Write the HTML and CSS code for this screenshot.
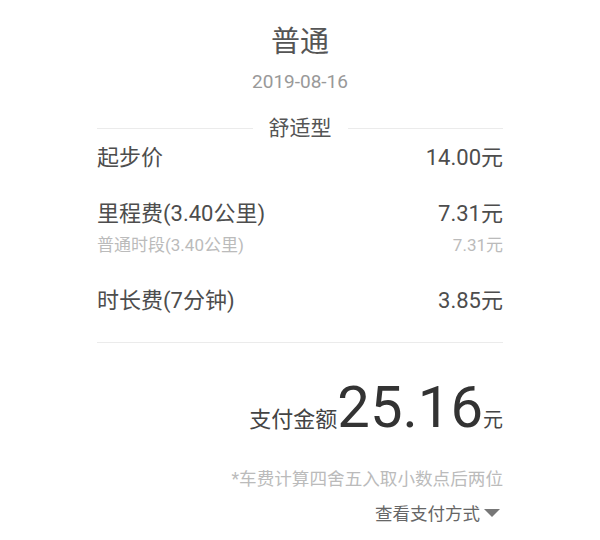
FILE: index.html
```html
<!DOCTYPE html>
<html lang="zh-CN">
<head>
    <meta charset="UTF-8">
    <meta name="viewport" content="width=device-width, initial-scale=1.0">
    <title>行程账单</title>
    <link rel="stylesheet" href="styles.css">
</head>
<body>

    <div class="bill">
        <!-- 顶部标题 -->
        <h1 class="bill-title">普通</h1>
        <p class="bill-date">2019-08-16</p>

        <div class="section-title">
            <span>舒适型</span>
        </div>

        <!-- 费用明细 -->
        <div class="fee-list">
            <div class="fee">
                <div class="fee-row">
                    <span>起步价</span>
                    <span>14.00元</span>
                </div>
            </div>
            <div class="fee">
                <div class="fee-row">
                    <span>里程费(3.40公里)</span>
                    <span>7.31元</span>
                </div>
                <div class="fee-sub">
                    <span>普通时段(3.40公里)</span>
                    <span>7.31元</span>
                </div>
            </div>
            <div class="fee">
                <div class="fee-row">
                    <span>时长费(7分钟)</span>
                    <span>3.85元</span>
                </div>
            </div>
        </div>

        <div class="total">
            <span class="total-label">支付金额</span>
            <span class="total-amount">25.16</span>
            <span class="total-unit">元</span>
        </div>

        <p class="note">*车费计算四舍五入取小数点后两位</p>

        <div class="pay-way">
            <span>查看支付方式</span>
            <span class="arrow"></span>
        </div>
    </div>

</body>
</html>
```

FILE: styles.css
```css
/* Reset CSS */
* {
    margin: 0;
    padding: 0;
    box-sizing: border-box;
}

body {
    font-family: Roboto, "Noto Sans CJK SC", sans-serif;
    background-color: #fff;
    color: #4d4d4d;
}

.bill {
    width: 406px;
    margin: 0 auto;
    padding-top: 24px;
}

.bill-title {
    font-size: 29px;
    font-weight: normal;
    text-align: center;
    line-height: 36px;
    color: #555;
}

.bill-date {
    font-size: 19px;
    text-align: center;
    color: #999;
    margin-top: 10px;
    line-height: 24px;
}

.section-title {
    display: flex;
    align-items: center;
    gap: 16px;
    margin-top: 20px;
    font-size: 21px;
    line-height: 28px;
    color: #555;
}

.section-title::before,
.section-title::after {
    content: "";
    flex: 1;
    height: 1px;
    background-color: #ebebeb;
}

.fee-list {
    border-bottom: 1px solid #ebebeb;
    padding-bottom: 25px;
}

.fee + .fee {
    margin-top: 24px;
}

.fee-row,
.fee-sub {
    display: flex;
    justify-content: space-between;
    align-items: center;
}

.fee-row {
    font-size: 22px;
    line-height: 32px;
}

.fee-sub {
    font-size: 17px;
    line-height: 22px;
    color: #bbb;
    margin-top: 4px;
    padding-bottom: 5px;
}

.total {
    display: flex;
    justify-content: flex-end;
    align-items: baseline;
    margin-top: 30px;
    color: #333;
}

.total-label {
    font-size: 22px;
    color: #444;
}

.total-amount {
    font-size: 58px;
    line-height: 68px;
}

.total-unit {
    font-size: 20px;
    color: #444;
}

.note {
    text-align: right;
    font-size: 17.6px;
    color: #bbb;
    margin-top: 24px;
}

.pay-way {
    display: flex;
    justify-content: flex-end;
    align-items: center;
    gap: 4px;
    font-size: 17.5px;
    color: #666;
    margin-top: 10px;
    padding-right: 3px;
}

.arrow {
    width: 0;
    height: 0;
    border-left: 8px solid transparent;
    border-right: 8px solid transparent;
    border-top: 8px solid #777;
}
```
